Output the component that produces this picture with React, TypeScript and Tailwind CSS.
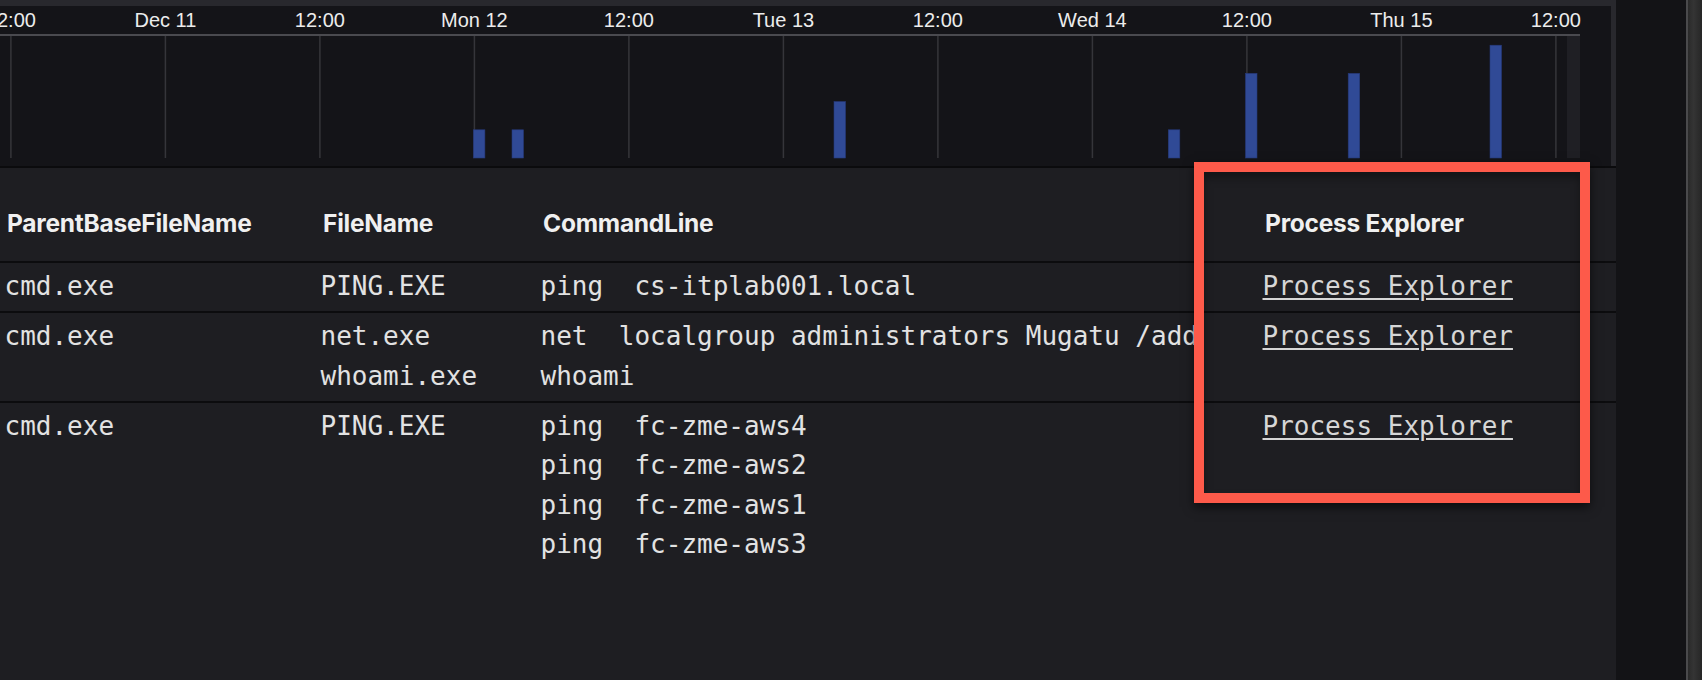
const ticks = ['12:00', 'Dec 11', '12:00', 'Mon 12', '12:00', 'Tue 13', '12:00', 'Wed 14', '12:00', 'Thu 15', '12:00'];

// x position (px) and event count for each histogram bucket
const bars = [
  { x: 473.4, n: 1 },
  { x: 512, n: 1 },
  { x: 834, n: 2 },
  { x: 1168.3, n: 1 },
  { x: 1245.5, n: 3 },
  { x: 1348.2, n: 3 },
  { x: 1490, n: 4 },
];

const rows = [
  { parent: 'cmd.exe', files: ['PING.EXE'], cmds: ['ping  cs-itplab001.local'] },
  {
    parent: 'cmd.exe',
    files: ['net.exe', 'whoami.exe'],
    cmds: ['net  localgroup administrators Mugatu /add', 'whoami'],
  },
  {
    parent: 'cmd.exe',
    files: ['PING.EXE'],
    cmds: ['ping  fc-zme-aws4', 'ping  fc-zme-aws2', 'ping  fc-zme-aws1', 'ping  fc-zme-aws3'],
  },
];

function Timeline() {
  const step = 154.5;
  const base = 152;
  return (
    <div className="bg-[#28282d] pt-[6px] pr-[5px] border-b-2 border-[#0b0b0d]">
      <svg width="1611" height="160" className="block bg-[#141418]">
        {ticks.map((t, i) => (
          <text
            key={'t' + i}
            x={10.9 + i * step}
            y={21}
            textAnchor="middle"
            fill="#ececec"
            fontSize="20"
            fontFamily="'Liberation Sans', Arial, sans-serif"
          >
            {t}
          </text>
        ))}
        <line x1="0" y1="29" x2="1580" y2="29" stroke="#4a4a4f" strokeWidth="2" />
        <rect x="1567" y="30" width="13" height="122" fill="#1f1f24" />
        {ticks.map((_, i) => (
          <line
            key={'g' + i}
            x1={10.9 + i * step}
            y1="30"
            x2={10.9 + i * step}
            y2={base}
            stroke="#35353a"
            strokeWidth="1.5"
          />
        ))}
        {bars.map((b, i) => (
          <rect
            key={'b' + i}
            x={b.x}
            y={base - b.n * 28.2}
            width="11.5"
            height={b.n * 28.2}
            fill="#304a96"
            stroke="#26397a"
            strokeWidth="0.6"
          />
        ))}
      </svg>
    </div>
  );
}

function ResultsTable() {
  const head =
    "pl-[2.5px] pt-[40px] pb-[23px] text-[24.5px] leading-[30px] font-bold tracking-[-0.01em] text-[#f0f0f0] font-['Inter',sans-serif]";
  return (
    <div className="flex-1 font-['DejaVu_Sans_Mono',monospace] text-[26px] leading-[39.5px] text-[#e2e2e2]">
      <div className="grid grid-cols-[316px_220px_722px_1fr] pl-[4.5px] border-b-2 border-[#0c0c0e]">
        <div className={head}>ParentBaseFileName</div>
        <div className={head}>FileName</div>
        <div className={head}>CommandLine</div>
        <div className={head}>Process Explorer</div>
      </div>
      {rows.map((r, i) => (
        <div
          key={i}
          className={`grid grid-cols-[316px_220px_722px_1fr] pl-[4.5px] pt-1 pb-[4.5px] ${
            i < rows.length - 1 ? 'border-b-2 border-[#0c0c0e]' : ''
          }`}
        >
          <div>{r.parent}</div>
          <div className="flex flex-col">
            {r.files.map((f) => (
              <span key={f}>{f}</span>
            ))}
          </div>
          <div className="flex flex-col whitespace-pre">
            {r.cmds.map((c) => (
              <span key={c}>{c}</span>
            ))}
          </div>
          <div>
            <a href="#" className="text-[#d6d6d6] underline decoration-[1.5px] underline-offset-[3px]">
              Process Explorer
            </a>
          </div>
        </div>
      ))}
    </div>
  );
}

export default function App() {
  return (
    <div className="relative w-[1702px] h-[680px] overflow-hidden flex bg-[#131316]">
      <div className="w-[1616px] flex flex-col bg-[#1e1e22] overflow-hidden">
        <Timeline />
        <ResultsTable />
      </div>
      <div className="w-[70px] bg-[#131316]" />
      <div className="w-[2px] bg-[#4a4a4c]" />
      <div className="flex-1 bg-[linear-gradient(90deg,#2a2a2a,#343434_40%,#262626)]" />

      {/* markup highlight around the Process Explorer column */}
      <div className="absolute left-[1194px] top-[162px] w-[396px] h-[341px] border-[10px] border-[#fd5a4a] shadow-[0_4px_10px_rgba(0,0,0,0.6),inset_0_6px_8px_rgba(0,0,0,0.35)]" />
    </div>
  );
}
